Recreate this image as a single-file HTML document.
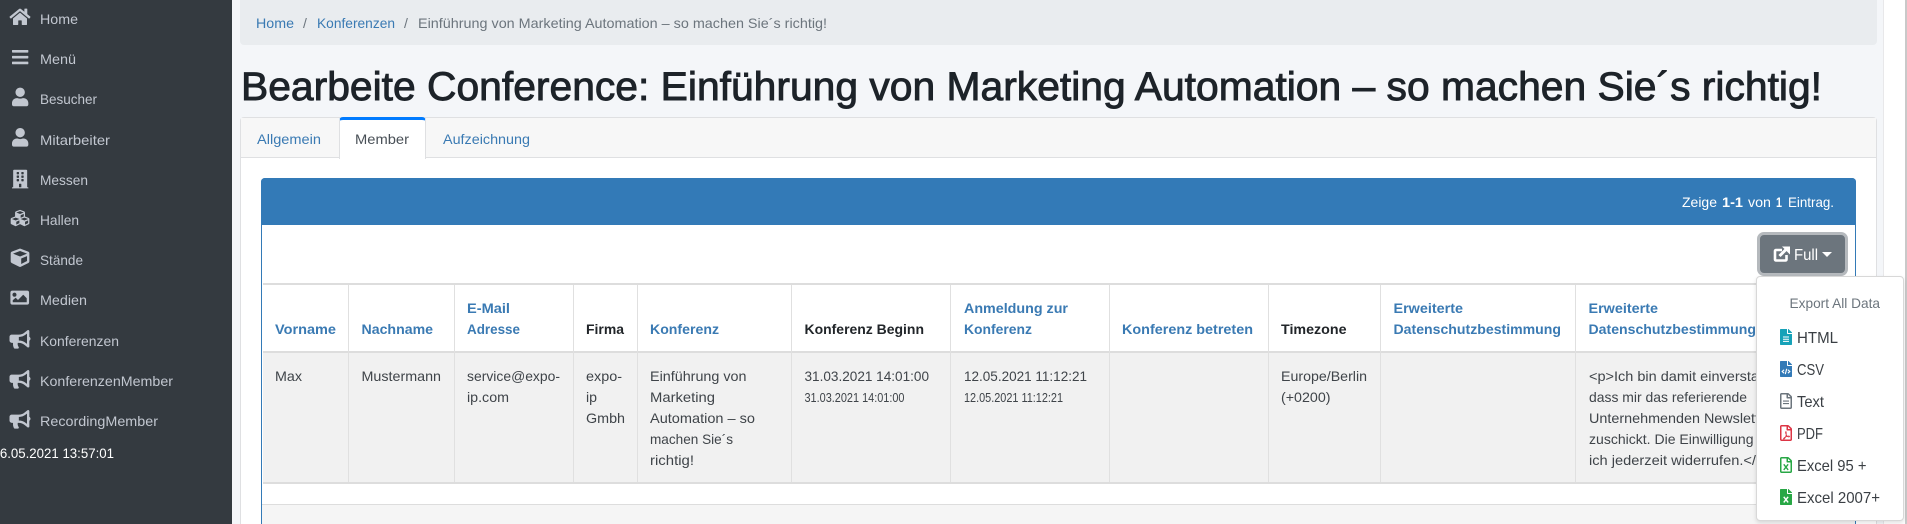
<!DOCTYPE html>
<html lang="de"><head><meta charset="utf-8"><title>Bearbeite Conference</title>
<style>
html,body{margin:0;padding:0;width:1907px;height:524px;overflow:hidden;background:#f4f6f9}
div{position:absolute;box-sizing:border-box}
#p{left:0;top:0;width:1907px;height:524px;overflow:hidden;background:#f4f6f9}
svg{position:absolute;left:0;top:0}
text{font-family:"Liberation Sans",Arial,sans-serif;font-size:14px}
.s{fill:#c2c7d0}.s path{fill:#c2c7d0}
.l{fill:#3a7ab3}.g{fill:#6c757d}.d{fill:#3f4449}
.hb{font-weight:bold;fill:#3a7ab3}.hk{font-weight:bold;fill:#212529}
.m{font-size:16px;fill:#3a3f44}
</style></head><body>
<div id="p">
<div style="left:0;top:0;width:232px;height:524px;background:#343a40"></div>
<div style="left:240px;top:-6px;width:1637px;height:50.5px;background:#e9ecef;border-radius:4px"></div>
<div style="left:1883px;top:0;width:24px;height:524px;background:#fff;border-left:1px solid #e8e8ea;border-right:2px solid #c9c9c9"></div>
<div style="left:240px;top:117px;width:1637px;height:407px;background:#fff;border:1px solid #dfe0e2;border-bottom:none;border-radius:4px 4px 0 0"></div>
<div style="left:241px;top:118px;width:1635px;height:40px;background:#f7f7f7;border-bottom:1px solid #dfe0e2"></div>
<div style="left:339px;top:117px;width:87px;height:42px;background:#fff;border:1px solid #dfe0e2;border-top:3px solid #007bff;border-bottom:none;border-radius:4px 4px 0 0"></div>
<div style="left:261px;top:178px;width:1595px;height:346px;background:#fff;border:1px solid #337ab7;border-bottom:none;border-radius:4px 4px 0 0"></div>
<div style="left:261px;top:178px;width:1595px;height:47px;background:#337ab7;border-radius:4px 4px 0 0"></div>
<div style="left:263px;top:283px;width:1592px;height:2px;background:#dddddd"></div>
<div style="left:263px;top:351px;width:1592px;height:133px;background:#f1f1f1;border-top:2px solid #dddddd;border-bottom:2px solid #dddddd"></div>
<div style="left:262px;top:504px;width:1593px;height:20px;background:#f5f5f5;border-top:1px solid #dddddd"></div>
<div style="left:348px;top:285px;width:1px;height:197px;background:#e0e0e0"></div>
<div style="left:454px;top:285px;width:1px;height:197px;background:#e0e0e0"></div>
<div style="left:573px;top:285px;width:1px;height:197px;background:#e0e0e0"></div>
<div style="left:637px;top:285px;width:1px;height:197px;background:#e0e0e0"></div>
<div style="left:791px;top:285px;width:1px;height:197px;background:#e0e0e0"></div>
<div style="left:950px;top:285px;width:1px;height:197px;background:#e0e0e0"></div>
<div style="left:1109px;top:285px;width:1px;height:197px;background:#e0e0e0"></div>
<div style="left:1268px;top:285px;width:1px;height:197px;background:#e0e0e0"></div>
<div style="left:1380px;top:285px;width:1px;height:197px;background:#e0e0e0"></div>
<div style="left:1575px;top:285px;width:1px;height:197px;background:#e0e0e0"></div>

<svg width="1907" height="524" viewBox="0 0 1907 524" xmlns="http://www.w3.org/2000/svg">
<g class="s">
<text x="40" y="24" textLength="38" lengthAdjust="spacingAndGlyphs">Home</text>
<text x="40" y="64" textLength="36" lengthAdjust="spacingAndGlyphs">Menü</text>
<text x="40" y="104" textLength="57" lengthAdjust="spacingAndGlyphs">Besucher</text>
<text x="40" y="145" textLength="70" lengthAdjust="spacingAndGlyphs">Mitarbeiter</text>
<text x="40" y="185" textLength="48" lengthAdjust="spacingAndGlyphs">Messen</text>
<text x="40" y="225" textLength="39" lengthAdjust="spacingAndGlyphs">Hallen</text>
<text x="40" y="265" textLength="43" lengthAdjust="spacingAndGlyphs">Stände</text>
<text x="40" y="305" textLength="47" lengthAdjust="spacingAndGlyphs">Medien</text>
<text x="40" y="346" textLength="79" lengthAdjust="spacingAndGlyphs">Konferenzen</text>
<text x="40" y="386" textLength="133" lengthAdjust="spacingAndGlyphs">KonferenzenMember</text>
<text x="40" y="426" textLength="118" lengthAdjust="spacingAndGlyphs">RecordingMember</text>
<path transform="translate(9.5,7.5) scale(.03646)" d="M280.37 148.26L96 300.11V464a16 16 0 0 0 16 16l112.06-.29a16 16 0 0 0 15.92-16V368a16 16 0 0 1 16-16h64a16 16 0 0 1 16 16v95.64a16 16 0 0 0 16 16.05L464 480a16 16 0 0 0 16-16V300L295.67 148.26a12.19 12.19 0 0 0-15.3 0zM571.6 251.47L488 182.56V44.05a12 12 0 0 0-12-12h-56a12 12 0 0 0-12 12v72.61L318.47 43a48 48 0 0 0-61 0L4.34 251.47a12 12 0 0 0-1.6 16.9l25.5 31A12 12 0 0 0 45.15 301l235.22-193.74a12.19 12.19 0 0 1 15.3 0L530.9 301a12 12 0 0 0 16.9-1.6l25.5-31a12 12 0 0 0-1.7-16.93z"/>
<path transform="translate(12,47.8) scale(.03646)" d="M16 132h416c8.837 0 16-7.163 16-16V76c0-8.837-7.163-16-16-16H16C7.163 60 0 67.163 0 76v40c0 8.837 7.163 16 16 16zm0 160h416c8.837 0 16-7.163 16-16v-40c0-8.837-7.163-16-16-16H16c-8.837 0-16 7.163-16 16v40c0 8.837 7.163 16 16 16zm0 160h416c8.837 0 16-7.163 16-16v-40c0-8.837-7.163-16-16-16H16c-8.837 0-16 7.163-16 16v40c0 8.837 7.163 16 16 16z"/>
<path transform="translate(12,87.6) scale(.03646)" d="M224 256c70.7 0 128-57.3 128-128S294.7 0 224 0 96 57.3 96 128s57.3 128 128 128zm89.6 32h-16.7c-22.2 10.2-46.9 16-72.9 16s-50.6-5.8-72.9-16h-16.7C60.2 288 0 348.2 0 422.4V464c0 26.5 21.5 48 48 48h352c26.5 0 48-21.5 48-48v-41.6c0-74.2-60.2-134.4-134.4-134.4z"/>
<path transform="translate(12,128) scale(.03646)" d="M224 256c70.7 0 128-57.3 128-128S294.7 0 224 0 96 57.3 96 128s57.3 128 128 128zm89.6 32h-16.7c-22.2 10.2-46.9 16-72.9 16s-50.6-5.8-72.9-16h-16.7C60.2 288 0 348.2 0 422.4V464c0 26.5 21.5 48 48 48h352c26.5 0 48-21.5 48-48v-41.6c0-74.2-60.2-134.4-134.4-134.4z"/>
<path transform="translate(12,169.7) scale(.03646)" d="M436 480h-20V24c0-13.255-10.745-24-24-24H56C42.745 0 32 10.745 32 24v456H12c-6.627 0-12 5.373-12 12v20h448v-20c0-6.627-5.373-12-12-12zM128 76c0-6.627 5.373-12 12-12h40c6.627 0 12 5.373 12 12v40c0 6.627-5.373 12-12 12h-40c-6.627 0-12-5.373-12-12V76zm0 96c0-6.627 5.373-12 12-12h40c6.627 0 12 5.373 12 12v40c0 6.627-5.373 12-12 12h-40c-6.627 0-12-5.373-12-12v-40zm52 148h-40c-6.627 0-12-5.373-12-12v-40c0-6.627 5.373-12 12-12h40c6.627 0 12 5.373 12 12v40c0 6.627-5.373 12-12 12zm76 160h-64v-84c0-6.627 5.373-12 12-12h40c6.627 0 12 5.373 12 12v84zm64-172c0 6.627-5.373 12-12 12h-40c-6.627 0-12-5.373-12-12v-40c0-6.627 5.373-12 12-12h40c6.627 0 12 5.373 12 12v40zm0-96c0 6.627-5.373 12-12 12h-40c-6.627 0-12-5.373-12-12v-40c0-6.627 5.373-12 12-12h40c6.627 0 12 5.373 12 12v40zm0-96c0 6.627-5.373 12-12 12h-40c-6.627 0-12-5.373-12-12V76c0-6.627 5.373-12 12-12h40c6.627 0 12 5.373 12 12v40z"/>
<path transform="translate(10.7,208.7) scale(.03646)" d="M488.6 250.2L392 214V105.5c0-15-9.3-28.4-23.4-33.7l-100-37.5c-8.1-3.1-17.1-3.1-25.3 0l-100 37.5c-14.1 5.3-23.4 18.7-23.4 33.7V214l-96.6 36.2C9.3 255.5 0 268.9 0 283.9V394c0 13.6 7.7 26.1 19.9 32.2l100 50c10.1 5.1 22.1 5.1 32.2 0l103.9-52 103.9 52c10.1 5.1 22.1 5.1 32.2 0l100-50c12.2-6.1 19.9-18.6 19.9-32.2V283.9c0-15-9.3-28.4-23.4-33.7zM358 214.8l-85 31.9v-68.2l85-37v73.3zM154 104.1l102-38.2 102 38.2v.6l-102 41.4-102-41.4v-.6zm84 291.1l-85 42.5v-79.1l85-38.8v75.4zm0-112l-102 41.4-102-41.4v-.6l102-38.2 102 38.2v.6zm240 112l-85 42.5v-79.1l85-38.8v75.4zm0-112l-102 41.4-102-41.4v-.6l102-38.2 102 38.2v.6z"/>
<path transform="translate(10.7,248.5) scale(.03646)" d="M239.1 6.3l-208 78c-18.7 7-31.1 25-31.1 45v225.1c0 18.2 10.3 34.8 26.5 42.9l208 104c13.5 6.8 29.4 6.8 42.9 0l208-104c16.3-8.1 26.5-24.8 26.5-42.9V129.3c0-20-12.4-37.9-31.1-44.9l-208-78C262 2.2 250 2.2 239.1 6.3zM256 68.4l192 72v1.1l-192 78-192-78v-1.1l192-72zm32 356V275.5l160-65v133.9l-160 80z"/>
<path transform="translate(10.4,288.3) scale(.03646)" d="M464 448H48c-26.51 0-48-21.49-48-48V112c0-26.51 21.49-48 48-48h416c26.51 0 48 21.49 48 48v288c0 26.51-21.49 48-48 48zM112 120c-30.928 0-56 25.072-56 56s25.072 56 56 56 56-25.072 56-56-25.072-56-56-56zM64 384h384V272l-87.515-87.515c-4.686-4.686-12.284-4.686-16.971 0L208 320l-55.515-55.515c-4.686-4.686-12.284-4.686-16.971 0L64 328v56z"/>
<path transform="translate(9.5,330) scale(.03646)" d="M576 240c0-23.63-12.95-44.04-32-55.12V32.01C544 23.26 537.02 0 512 0c-7.12 0-14.19 2.38-19.98 7.02l-85.03 68.03C364.28 109.19 310.66 128 256 128H64c-35.35 0-64 28.65-64 64v96c0 35.35 28.65 64 64 64h33.7c-1.39 10.48-2.18 21.14-2.18 32 0 39.77 9.26 77.35 25.56 110.94 5.19 10.69 16.52 17.06 28.4 17.06h74.28c26.05 0 41.69-29.84 25.9-50.56-16.4-21.52-26.15-48.36-26.15-77.44 0-11.11 1.62-21.79 4.41-32H256c54.66 0 108.28 18.81 150.98 52.95l85.03 68.03a32.023 32.023 0 0 0 19.98 7.02c24.92 0 32-22.78 32-32V295.13C563.05 284.04 576 263.63 576 240zm-96 141.42l-33.05-26.44C392.95 311.78 325.12 288 256 288v-96c69.12 0 136.95-23.78 190.95-66.98L480 98.58v282.84z"/>
<path transform="translate(9.5,370) scale(.03646)" d="M576 240c0-23.63-12.95-44.04-32-55.12V32.01C544 23.26 537.02 0 512 0c-7.12 0-14.19 2.38-19.98 7.02l-85.03 68.03C364.28 109.19 310.66 128 256 128H64c-35.35 0-64 28.65-64 64v96c0 35.35 28.65 64 64 64h33.7c-1.39 10.48-2.18 21.14-2.18 32 0 39.77 9.26 77.35 25.56 110.94 5.19 10.69 16.52 17.06 28.4 17.06h74.28c26.05 0 41.69-29.84 25.9-50.56-16.4-21.52-26.15-48.36-26.15-77.44 0-11.11 1.62-21.79 4.41-32H256c54.66 0 108.28 18.81 150.98 52.95l85.03 68.03a32.023 32.023 0 0 0 19.98 7.02c24.92 0 32-22.78 32-32V295.13C563.05 284.04 576 263.63 576 240zm-96 141.42l-33.05-26.44C392.95 311.78 325.12 288 256 288v-96c69.12 0 136.95-23.78 190.95-66.98L480 98.58v282.84z"/>
<path transform="translate(9.5,410) scale(.03646)" d="M576 240c0-23.63-12.95-44.04-32-55.12V32.01C544 23.26 537.02 0 512 0c-7.12 0-14.19 2.38-19.98 7.02l-85.03 68.03C364.28 109.19 310.66 128 256 128H64c-35.35 0-64 28.65-64 64v96c0 35.35 28.65 64 64 64h33.7c-1.39 10.48-2.18 21.14-2.18 32 0 39.77 9.26 77.35 25.56 110.94 5.19 10.69 16.52 17.06 28.4 17.06h74.28c26.05 0 41.69-29.84 25.9-50.56-16.4-21.52-26.15-48.36-26.15-77.44 0-11.11 1.62-21.79 4.41-32H256c54.66 0 108.28 18.81 150.98 52.95l85.03 68.03a32.023 32.023 0 0 0 19.98 7.02c24.92 0 32-22.78 32-32V295.13C563.05 284.04 576 263.63 576 240zm-96 141.42l-33.05-26.44C392.95 311.78 325.12 288 256 288v-96c69.12 0 136.95-23.78 190.95-66.98L480 98.58v282.84z"/>
</g>
<text x="-7.5" y="458" fill="#fff" textLength="121.5" lengthAdjust="spacingAndGlyphs">16.05.2021 13:57:01</text>

<text class="l" x="256" y="28" textLength="38" lengthAdjust="spacingAndGlyphs">Home</text>
<text class="g" x="303" y="28">/</text>
<text class="l" x="317" y="28" textLength="78" lengthAdjust="spacingAndGlyphs">Konferenzen</text>
<text class="g" x="404" y="28">/</text>
<text class="g" x="418" y="28" textLength="409" lengthAdjust="spacingAndGlyphs">Einführung von Marketing Automation – so machen Sie´s richtig!</text>

<text x="241" y="100" fill="#1d2329" stroke="#1d2329" stroke-width=".9" style="font-size:39.5px" textLength="1581" lengthAdjust="spacingAndGlyphs">Bearbeite Conference: Einführung von Marketing Automation – so machen Sie´s richtig!</text>

<text class="l" x="257" y="144" textLength="64" lengthAdjust="spacingAndGlyphs">Allgemein</text>
<text x="355" y="144" fill="#495057" textLength="54" lengthAdjust="spacingAndGlyphs">Member</text>
<text class="l" x="443" y="144" textLength="87" lengthAdjust="spacingAndGlyphs">Aufzeichnung</text>

<g fill="#fff">
<text x="1682" y="207" textLength="35" lengthAdjust="spacingAndGlyphs">Zeige</text>
<text x="1722" y="207" style="font-weight:bold" textLength="21" lengthAdjust="spacingAndGlyphs">1-1</text>
<text x="1748" y="207" textLength="23" lengthAdjust="spacingAndGlyphs">von</text>
<text x="1776" y="207" style="font-weight:bold" textLength="6" lengthAdjust="spacingAndGlyphs">1</text>
<text x="1788" y="207" textLength="46" lengthAdjust="spacingAndGlyphs">Eintrag.</text>
</g>

<text class="hb" x="275" y="334" textLength="61" lengthAdjust="spacingAndGlyphs">Vorname</text>
<text class="hb" x="361.5" y="334" textLength="71.5" lengthAdjust="spacingAndGlyphs">Nachname</text>
<text class="hb" x="467" y="313" textLength="43" lengthAdjust="spacingAndGlyphs">E-Mail</text>
<text class="hb" x="467" y="334" textLength="53" lengthAdjust="spacingAndGlyphs">Adresse</text>
<text class="hk" x="586" y="334" textLength="38" lengthAdjust="spacingAndGlyphs">Firma</text>
<text class="hb" x="650" y="334" textLength="69" lengthAdjust="spacingAndGlyphs">Konferenz</text>
<text class="hk" x="804.5" y="334" textLength="119.5" lengthAdjust="spacingAndGlyphs">Konferenz Beginn</text>
<text class="hb" x="964" y="313" textLength="104" lengthAdjust="spacingAndGlyphs">Anmeldung zur</text>
<text class="hb" x="964" y="334" textLength="68" lengthAdjust="spacingAndGlyphs">Konferenz</text>
<text class="hb" x="1122" y="334" textLength="131" lengthAdjust="spacingAndGlyphs">Konferenz betreten</text>
<text class="hk" x="1281" y="334" textLength="65.5" lengthAdjust="spacingAndGlyphs">Timezone</text>
<text class="hb" x="1393.5" y="313" textLength="69.5" lengthAdjust="spacingAndGlyphs">Erweiterte</text>
<text class="hb" x="1393.5" y="334" textLength="167.5" lengthAdjust="spacingAndGlyphs">Datenschutzbestimmung</text>
<text class="hb" x="1588.5" y="313" textLength="69.5" lengthAdjust="spacingAndGlyphs">Erweiterte</text>
<text class="hb" x="1588.5" y="334" textLength="167.5" lengthAdjust="spacingAndGlyphs">Datenschutzbestimmung</text>

<g class="d">
<text x="275" y="381" textLength="27" lengthAdjust="spacingAndGlyphs">Max</text>
<text x="361.5" y="381" textLength="79.5" lengthAdjust="spacingAndGlyphs">Mustermann</text>
<text x="467" y="381" textLength="93" lengthAdjust="spacingAndGlyphs">service@expo-</text>
<text x="467" y="402" textLength="42" lengthAdjust="spacingAndGlyphs">ip.com</text>
<text x="586" y="381" textLength="36" lengthAdjust="spacingAndGlyphs">expo-</text>
<text x="586" y="402" textLength="11" lengthAdjust="spacingAndGlyphs">ip</text>
<text x="586" y="423" textLength="39" lengthAdjust="spacingAndGlyphs">Gmbh</text>
<text x="650" y="381" textLength="96.5" lengthAdjust="spacingAndGlyphs">Einführung von</text>
<text x="650" y="402" textLength="65" lengthAdjust="spacingAndGlyphs">Marketing</text>
<text x="650" y="423" textLength="105" lengthAdjust="spacingAndGlyphs">Automation – so</text>
<text x="650" y="444" textLength="83" lengthAdjust="spacingAndGlyphs">machen Sie´s</text>
<text x="650" y="465" textLength="44" lengthAdjust="spacingAndGlyphs">richtig!</text>
<text x="804.5" y="381" textLength="124.5" lengthAdjust="spacingAndGlyphs">31.03.2021 14:01:00</text>
<text x="804.5" y="402" style="font-size:12.5px" textLength="100" lengthAdjust="spacingAndGlyphs">31.03.2021 14:01:00</text>
<text x="964" y="381" textLength="123" lengthAdjust="spacingAndGlyphs">12.05.2021 11:12:21</text>
<text x="964" y="402" style="font-size:12.5px" textLength="99" lengthAdjust="spacingAndGlyphs">12.05.2021 11:12:21</text>
<text x="1281" y="381" textLength="86" lengthAdjust="spacingAndGlyphs">Europe/Berlin</text>
<text x="1281" y="402" textLength="49.5" lengthAdjust="spacingAndGlyphs">(+0200)</text>
<text x="1589" y="381" textLength="170" lengthAdjust="spacingAndGlyphs">&lt;p&gt;Ich bin damit einversta</text>
<text x="1589" y="402" textLength="158" lengthAdjust="spacingAndGlyphs">dass mir das referierende</text>
<text x="1589" y="423" textLength="170" lengthAdjust="spacingAndGlyphs">Unternehmenden Newslett</text>
<text x="1589" y="444" textLength="164.5" lengthAdjust="spacingAndGlyphs">zuschickt. Die Einwilligung</text>
<text x="1589" y="465" textLength="167" lengthAdjust="spacingAndGlyphs">ich jederzeit widerrufen.&lt;/</text>
</g>
</svg>

<div style="left:1757px;top:232px;width:91px;height:44px;background:#6c757d;border:3px solid #b5b9bd;border-radius:7px"></div>
<svg width="1907" height="524" viewBox="0 0 1907 524" xmlns="http://www.w3.org/2000/svg">
<path d="M1782 250h-6a1 1 0 0 0-1 1v8.500a1 1 0 0 0 1 1h9.500a1 1 0 0 0 1-1v-4.500" fill="none" stroke="#fff" stroke-width="2.600"/>
<path d="M1779.500 256L1787 248.500" fill="none" stroke="#fff" stroke-width="3"/>
<path d="M1782 246.500h8v8z" fill="#fff"/>
<text x="1794" y="260" fill="#fff" style="font-size:16px" textLength="24" lengthAdjust="spacingAndGlyphs">Full</text>
<path d="M1822 252h10l-5 5z" fill="#fff"/>
</svg>

<div style="left:1756px;top:276px;width:148px;height:245px;background:#fff;border:1px solid #d8d8d8;border-radius:4px;box-shadow:0 2px 4px rgba(0,0,0,.12)"></div>
<svg width="1907" height="524" viewBox="0 0 1907 524" xmlns="http://www.w3.org/2000/svg">
<text class="g" x="1789.500" y="308" textLength="90.500" lengthAdjust="spacingAndGlyphs">Export All Data</text>
<text class="m" x="1797" y="343" textLength="41" lengthAdjust="spacingAndGlyphs">HTML</text>
<text class="m" x="1797" y="375" textLength="27" lengthAdjust="spacingAndGlyphs">CSV</text>
<text class="m" x="1797" y="407" textLength="27" lengthAdjust="spacingAndGlyphs">Text</text>
<text class="m" x="1797" y="439" textLength="26" lengthAdjust="spacingAndGlyphs">PDF</text>
<text class="m" x="1797" y="471" textLength="69.500" lengthAdjust="spacingAndGlyphs">Excel 95 +</text>
<text class="m" x="1797" y="503" textLength="83" lengthAdjust="spacingAndGlyphs">Excel 2007+</text>

<g transform="translate(1780,329) scale(.03125)">
<path fill="#17a2b8" d="M224 136V0H24C10.700 0 0 10.700 0 24v464c0 13.300 10.700 24 24 24h336c13.300 0 24-10.700 24-24V160H248c-13.200 0-24-10.800-24-24zm160-14.100v6.100H256V0h6.100c6.400 0 12.500 2.500 17 7l97.900 98c4.500 4.500 7 10.600 7 16.900z"/>
<path fill="#fff" d="M96 240h192v32H96zM96 310h192v32H96zM96 380h192v32H96z"/>
</g>
<g transform="translate(1780,361) scale(.03125)">
<path fill="#337ab7" d="M224 136V0H24C10.700 0 0 10.700 0 24v464c0 13.300 10.700 24 24 24h336c13.300 0 24-10.700 24-24V160H248c-13.200 0-24-10.800-24-24zm160-14.100v6.100H256V0h6.100c6.400 0 12.500 2.500 17 7l97.900 98c4.500 4.500 7 10.600 7 16.900z"/>
<path fill="none" stroke="#fff" stroke-width="36" d="M130 280l-60 55 60 55M254 280l60 55-60 55M215 250l-46 170"/>
</g>
<g transform="translate(1780,393) scale(.03125)">
<path fill="#6c757d" d="M369.900 97.900L286 14C277 5 264.800-.1 252.100-.1H48C21.500 0 0 21.500 0 48v416c0 26.500 21.500 48 48 48h288c26.500 0 48-21.500 48-48V131.900c0-12.700-5.100-25-14.100-34zM332.100 128H256V51.900l76.100 76.100zM48 464V48h160v104c0 13.300 10.700 24 24 24h104v288H48z"/>
<path fill="#6c757d" d="M96 240h192v36H96zM96 320h192v36H96z"/>
</g>
<g transform="translate(1780,425) scale(.03125)">
<path fill="#dc3545" d="M369.900 97.900L286 14C277 5 264.800-.1 252.100-.1H48C21.500 0 0 21.500 0 48v416c0 26.500 21.500 48 48 48h288c26.500 0 48-21.500 48-48V131.900c0-12.700-5.100-25-14.100-34zM332.100 128H256V51.900l76.100 76.100zM48 464V48h160v104c0 13.300 10.700 24 24 24h104v288H48z"/>
<path fill="none" stroke="#dc3545" stroke-width="26" d="M185 210c-20 30 10 110 45 150 30 30 80 30 75 5-5-25-90-10-150 30-35 25-55 50-35 55 25 5 60-60 75-120 10-45 5-130-10-120z"/>
</g>
<g transform="translate(1780,457) scale(.03125)">
<path fill="#28a745" d="M369.900 97.900L286 14C277 5 264.800-.1 252.100-.1H48C21.500 0 0 21.500 0 48v416c0 26.500 21.500 48 48 48h288c26.500 0 48-21.500 48-48V131.900c0-12.700-5.100-25-14.100-34zM332.100 128H256V51.900l76.100 76.100zM48 464V48h160v104c0 13.300 10.700 24 24 24h104v288H48z"/>
<path fill="none" stroke="#28a745" stroke-width="44" d="M120 235l140 180M260 235L120 415"/>
</g>
<g transform="translate(1780,489) scale(.03125)">
<path fill="#28a745" d="M224 136V0H24C10.700 0 0 10.700 0 24v464c0 13.300 10.700 24 24 24h336c13.300 0 24-10.700 24-24V160H248c-13.200 0-24-10.800-24-24zm160-14.100v6.100H256V0h6.100c6.400 0 12.500 2.500 17 7l97.900 98c4.500 4.500 7 10.600 7 16.900z"/>
<path fill="none" stroke="#fff" stroke-width="46" d="M120 250l140 180M260 250L120 430"/>
</g>
</svg>
</div>
</body></html>
